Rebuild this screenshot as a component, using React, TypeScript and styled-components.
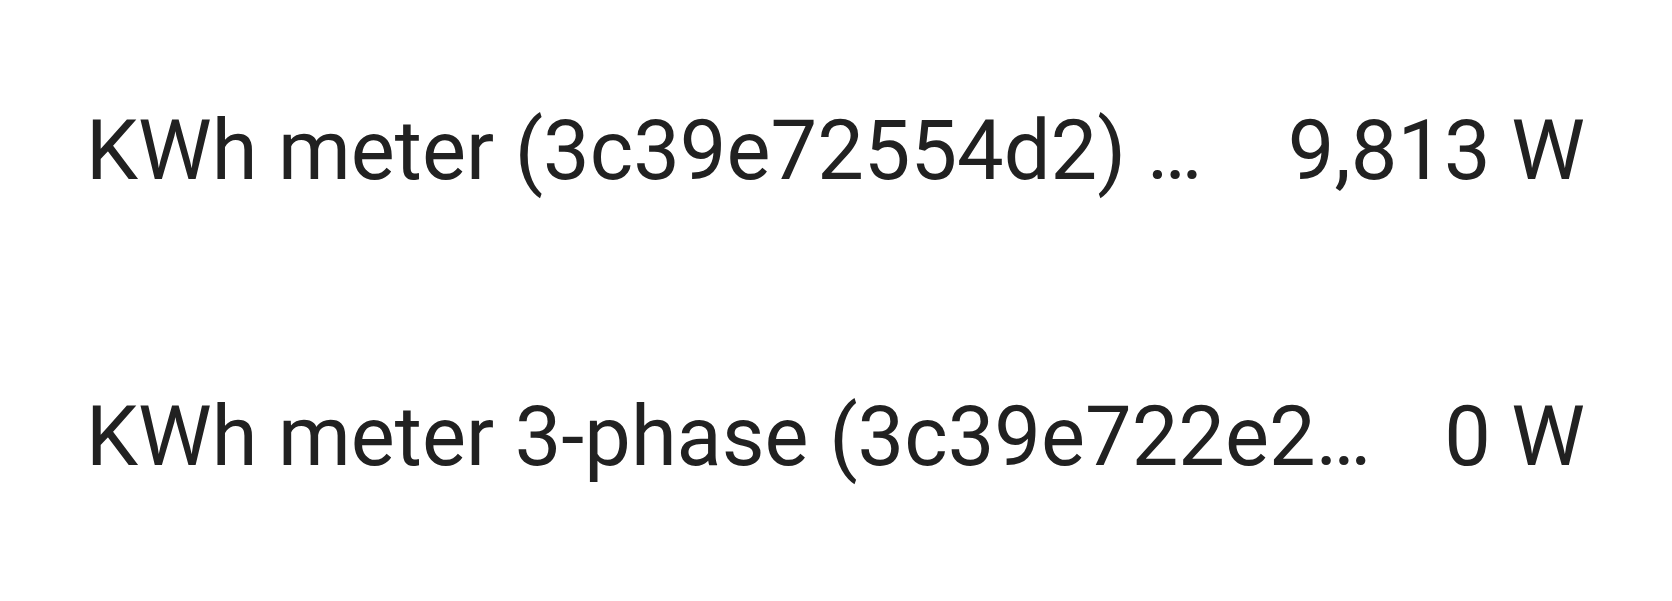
import React from 'react';
import styled, { createGlobalStyle } from 'styled-components';

const GlobalStyle = createGlobalStyle`
  html,
  body {
    margin: 0;
    padding: 0;
    background: #ffffff;
  }

  body {
    font-family: Roboto, 'Noto Sans', sans-serif;
    -webkit-font-smoothing: antialiased;
  }
`;

export const EntityList = styled.section`
  display: flex;
  flex-direction: column;
  padding: 7px 87px 0 86px;
  color: #212121;
`;

export const EntityRow = styled.div`
  display: flex;
  align-items: center;
  min-height: 286px;
  min-width: 0;
  font-size: 83px;
  line-height: normal;
`;

export const EntityName = styled.div`
  flex: 1 1 auto;
  min-width: 0;
  overflow: hidden;
  text-overflow: ellipsis;
  white-space: nowrap;
`;

export const EntityState = styled.div`
  flex: 0 0 auto;
  margin-left: 64px;
  white-space: nowrap;
  text-align: right;
`;

interface IMeter {
  id: string;
  name: string;
  power: number;
}

const meters: IMeter[] = [
  { id: 'kwh_1', name: 'KWh meter (3c39e72554d2) Power', power: 9813 },
  { id: 'kwh_3', name: 'KWh meter 3-phase (3c39e722e2a4) Power', power: 0 },
];

const formatPower = (watts: number) => `${watts.toLocaleString('en-US')} W`;

export default function App() {
  return (
    <>
      <GlobalStyle />
      <EntityList>
        {meters.map(meter => (
          <EntityRow key={meter.id}>
            <EntityName title={meter.name}>{meter.name}</EntityName>
            <EntityState>{formatPower(meter.power)}</EntityState>
          </EntityRow>
        ))}
      </EntityList>
    </>
  );
}
